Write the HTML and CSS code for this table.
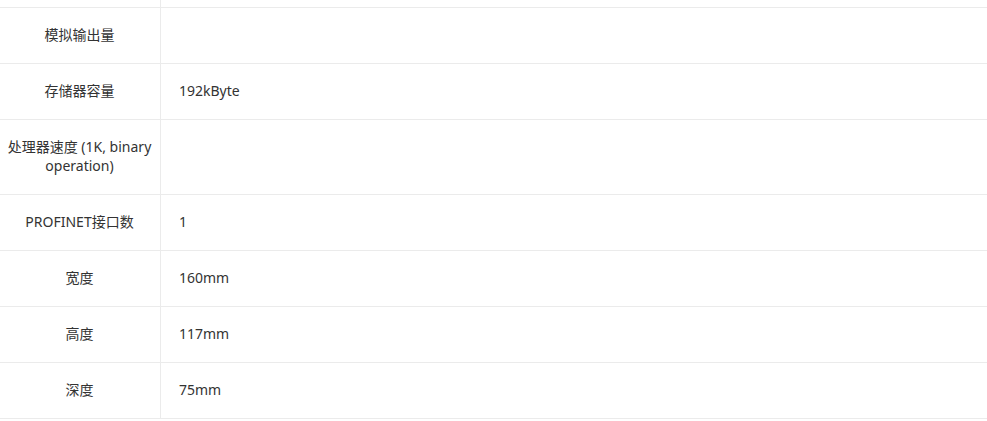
FILE: index.html
```html
<!DOCTYPE html>
<html lang="zh-CN">
<head>
<meta charset="utf-8">
<title>参数</title>
<link rel="stylesheet" href="styles.css">
</head>
<body>
<div class="spec">
  <div class="cell name top"></div><div class="cell value top"></div>
  <div class="cell name">模拟输出量</div><div class="cell value"></div>
  <div class="cell name">存储器容量</div><div class="cell value">192kByte</div>
  <div class="cell name">处理器速度 (1K, binary operation)</div><div class="cell value"></div>
  <div class="cell name">PROFINET接口数</div><div class="cell value">1</div>
  <div class="cell name">宽度</div><div class="cell value">160mm</div>
  <div class="cell name">高度</div><div class="cell value">117mm</div>
  <div class="cell name">深度</div><div class="cell value">75mm</div>
</div>
</body>
</html>
```

FILE: styles.css
```css
html, body {
  margin: 0;
  padding: 0;
  background: #fff;
}
body {
  font-family: "Noto Sans", "Noto Sans CJK SC", sans-serif;
  font-size: 14px;
  line-height: 19px;
  color: #333;
}
.spec {
  display: grid;
  grid-template-columns: 161px 1fr;
}
.cell {
  box-sizing: border-box;
  border-bottom: 1px solid #ebebeb;
  padding: 17px 0 19px;
  display: flex;
  align-items: center;
}
.name {
  border-right: 1px solid #ebebeb;
  justify-content: center;
  text-align: center;
  padding-left: 2px;
  padding-right: 3px;
}
.value {
  padding-left: 18px;
  padding-right: 18px;
}
.cell.top {
  padding: 0;
  height: 8px;
}
```
